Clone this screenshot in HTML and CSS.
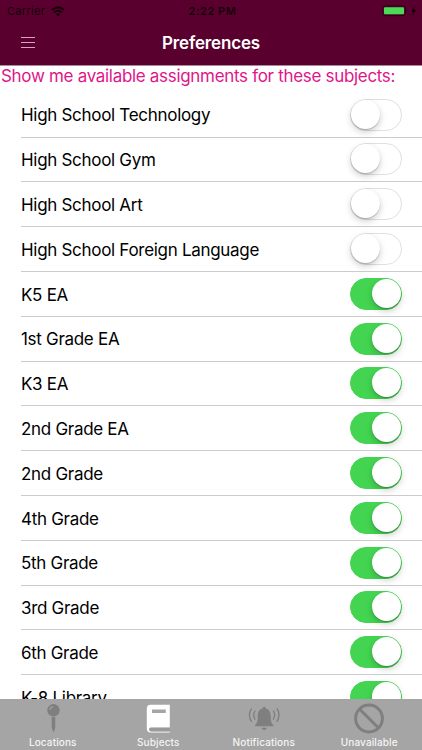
FILE: index.html
```html
<!DOCTYPE html>
<html lang="en">
<head>
<meta charset="utf-8">
<title>Preferences</title>
<link rel="stylesheet" href="styles.css">
</head>
<body>
<div class="screen">
    <header>
        <div class="statusbar">
            <div class="carrier">
                <span>Carrier</span>
                <svg width="14" height="11" viewBox="0 0 14 11">
                    <path d="M1 4 Q7 -1.2 13 4" fill="none" stroke="#16000b" stroke-width="2"/>
                    <path d="M3.2 6.5 Q7 3 10.8 6.5" fill="none" stroke="#16000b" stroke-width="1.8"/>
                    <path d="M4.9 8.2 Q7 6.4 9.1 8.2 L7 10.4Z" fill="#16000b"/>
                </svg>
            </div>
            <div class="time">2:22 PM</div>
            <div class="power">
                <svg width="36" height="12" viewBox="0 0 36 12">
                    <rect x="0.5" y="1" width="23" height="9.6" rx="2.2" fill="none" stroke="#26000f"/>
                    <rect x="2" y="2.3" width="20" height="7" rx="1" fill="#4cd95a"/>
                    <path d="M24.7 4.2 Q26.2 5.8 24.7 7.4Z" fill="#26000f"/>
                    <path d="M32.8 0.8 L29 6.4 H31.4 L30.2 10.8 L34.2 5 H31.7Z" fill="#16000b"/>
                </svg>
            </div>
        </div>
        <div class="navbar">
            <svg class="menu" width="16" height="14" viewBox="0 0 16 14">
                <path d="M1 1.5H15M1 6.5H15M1 11.5H15" stroke="#d9a3c0" stroke-width="1"/>
            </svg>
            <h1>Preferences</h1>
        </div>
    </header>

    <p class="prompt">Show me available assignments for these subjects:</p>

    <div class="subjects">
        <label class="row"><span>High School Technology</span><input type="checkbox" class="switch"></label>
        <label class="row"><span>High School Gym</span><input type="checkbox" class="switch"></label>
        <label class="row"><span>High School Art</span><input type="checkbox" class="switch"></label>
        <label class="row"><span>High School Foreign Language</span><input type="checkbox" class="switch"></label>
        <label class="row"><span>K5 EA</span><input type="checkbox" class="switch" checked></label>
        <label class="row"><span>1st Grade EA</span><input type="checkbox" class="switch" checked></label>
        <label class="row"><span>K3 EA</span><input type="checkbox" class="switch" checked></label>
        <label class="row"><span>2nd Grade EA</span><input type="checkbox" class="switch" checked></label>
        <label class="row"><span>2nd Grade</span><input type="checkbox" class="switch" checked></label>
        <label class="row"><span>4th Grade</span><input type="checkbox" class="switch" checked></label>
        <label class="row"><span>5th Grade</span><input type="checkbox" class="switch" checked></label>
        <label class="row"><span>3rd Grade</span><input type="checkbox" class="switch" checked></label>
        <label class="row"><span>6th Grade</span><input type="checkbox" class="switch" checked></label>
        <label class="row"><span>K-8 Library</span><input type="checkbox" class="switch" checked></label>
    </div>

    <nav class="tabbar">
        <div class="tab">
            <svg width="32" height="32" viewBox="0 0 32 32">
                <path d="M14.7 14H18.3V24.5L16.5 29.5L14.7 24.5Z" fill="#7f7f7f"/>
                <circle cx="16.5" cy="7.3" r="6.2" fill="#7f7f7f"/>
                <path d="M12.9 7A3.5 3.5 0 0 1 16 3.8" fill="none" stroke="#a5a5a5" stroke-width="1.1"/>
            </svg>
            <span>Locations</span>
        </div>
        <div class="tab active">
            <svg width="32" height="32" viewBox="0 0 32 32">
                <path d="M8.5 1.7H27.8V24.5H8.7Q7.3 24.9 7.3 26.3Q7.3 27.8 8.8 28.3H27.8V29.5H8.5Q4.8 29.2 4.8 25.5V5.5Q4.8 2 8.5 1.7Z" fill="#fff"/>
                <path d="M8.7 24.7H27.8V28.4H8.7Q7 28 7 26.5Q7 25 8.7 24.7Z" fill="#9a9a9a"/>
                <rect x="10" y="6.5" width="13.8" height="3.5" fill="#a5a5a5"/>
            </svg>
            <span>Subjects</span>
        </div>
        <div class="tab">
            <svg width="32" height="32" viewBox="0 0 32 32">
                <path d="M16.2 3.7Q17.8 3.7 17.8 5.5C21.3 6.4 22.7 9.3 22.7 13C22.7 18.5 23.5 20.5 25.4 22V23.3H7V22C8.9 20.5 9.7 18.5 9.7 13C9.7 9.3 11.1 6.4 14.6 5.5Q14.6 3.7 16.2 3.7Z" fill="#7f7f7f"/>
                <path d="M13.6 24.8H18.8Q18.4 27 16.2 27T13.6 24.8Z" fill="#7f7f7f"/>
                <path d="M7.2 7.5Q4.3 12.1 7.2 16.7M3.6 5.3Q-0.8 12.1 3.6 18.9M25.2 7.5Q28.1 12.1 25.2 16.7M28.8 5.3Q33.2 12.1 28.8 18.9" fill="none" stroke="#7f7f7f" stroke-width="1.3"/>
            </svg>
            <span>Notifications</span>
        </div>
        <div class="tab">
            <svg width="32" height="32" viewBox="0 0 32 32">
                <circle cx="16" cy="15.5" r="13.4" fill="none" stroke="#7f7f7f" stroke-width="3"/>
                <path d="M6.7 6.2L25.3 24.8" stroke="#7f7f7f" stroke-width="3"/>
            </svg>
            <span>Unavailable</span>
        </div>
    </nav>
</div>
</body>
</html>
```
FILE: styles.css
```css
body {
    margin: 0;
    background-color: white;
    font-family: Inter, "Liberation Sans", sans-serif;
}

.screen {
    display: flex;
    flex-direction: column;
    height: 750px;
    overflow: hidden;
}

header {
    flex: none;
    height: 66px;
    background-color: #5a002e;
    border-bottom: 1px solid #a9899a;
    box-sizing: border-box;
}

.statusbar {
    display: grid;
    grid-template-columns: 1fr auto 1fr;
    align-items: center;
    height: 22px;
    padding: 0 4px 0 7px;
    font-size: 11px;
    color: #16000b;
}

.carrier {
    display: flex;
    align-items: center;
    gap: 6px;
    letter-spacing: 0.3px;
}

.time {
    font-weight: 600;
    letter-spacing: 0.55px;
}

.power {
    display: flex;
    justify-content: flex-end;
}

.navbar {
    display: grid;
    grid-template-columns: 36px 1fr 36px;
    align-items: center;
    height: 42px;
}

.menu {
    margin-left: 20px;
}

h1 {
    margin: 0;
    text-align: center;
    font-size: 17px;
    font-weight: 600;
    letter-spacing: -0.15px;
    color: white;
}

.prompt {
    flex: none;
    margin: 0;
    height: 26.8px;
    line-height: 21px;
    padding-left: 1px;
    font-size: 17px;
    letter-spacing: -0.31px;
    color: #e0168a;
    white-space: nowrap;
}

.subjects {
    flex: 1;
    min-height: 0;
    overflow: hidden;
    padding-left: 21px;
}

.row {
    display: flex;
    align-items: center;
    justify-content: space-between;
    box-sizing: border-box;
    height: 44.8px;
    padding-right: 20.5px;
    border-bottom: 1px solid #cbcbcd;
    font-size: 17px;
    letter-spacing: -0.3px;
    color: #000;
}

.row span {
    padding-top: 1.5px;
}

/* iOS style toggle */
.switch {
    appearance: none;
    display: flex;
    box-sizing: border-box;
    width: 52px;
    height: 32px;
    margin: 0;
    padding: 0;
    border: 1.5px solid #e0e0e0;
    border-radius: 16px;
    background-color: white;
}

.switch::before {
    content: "";
    width: 29px;
    height: 29px;
    border-radius: 50%;
    background-color: white;
    box-shadow: 0 3px 7px rgba(0,0,0,0.2), 0 1px 1px rgba(0,0,0,0.2);
}

.switch:checked {
    justify-content: flex-end;
    background-color: #43d551;
    border-color: #43d551;
}

.tabbar {
    flex: none;
    display: grid;
    grid-template-columns: repeat(4, 1fr);
    height: 51px;
    background-color: #a5a5a5;
}

.tab {
    display: flex;
    flex-direction: column;
    align-items: center;
    padding-top: 4px;
    font-size: 10px;
    font-weight: 500;
    line-height: 14px;
    letter-spacing: 0.12px;
    color: #f4f4f4;
}

.tab svg {
    flex: none;
}
```
